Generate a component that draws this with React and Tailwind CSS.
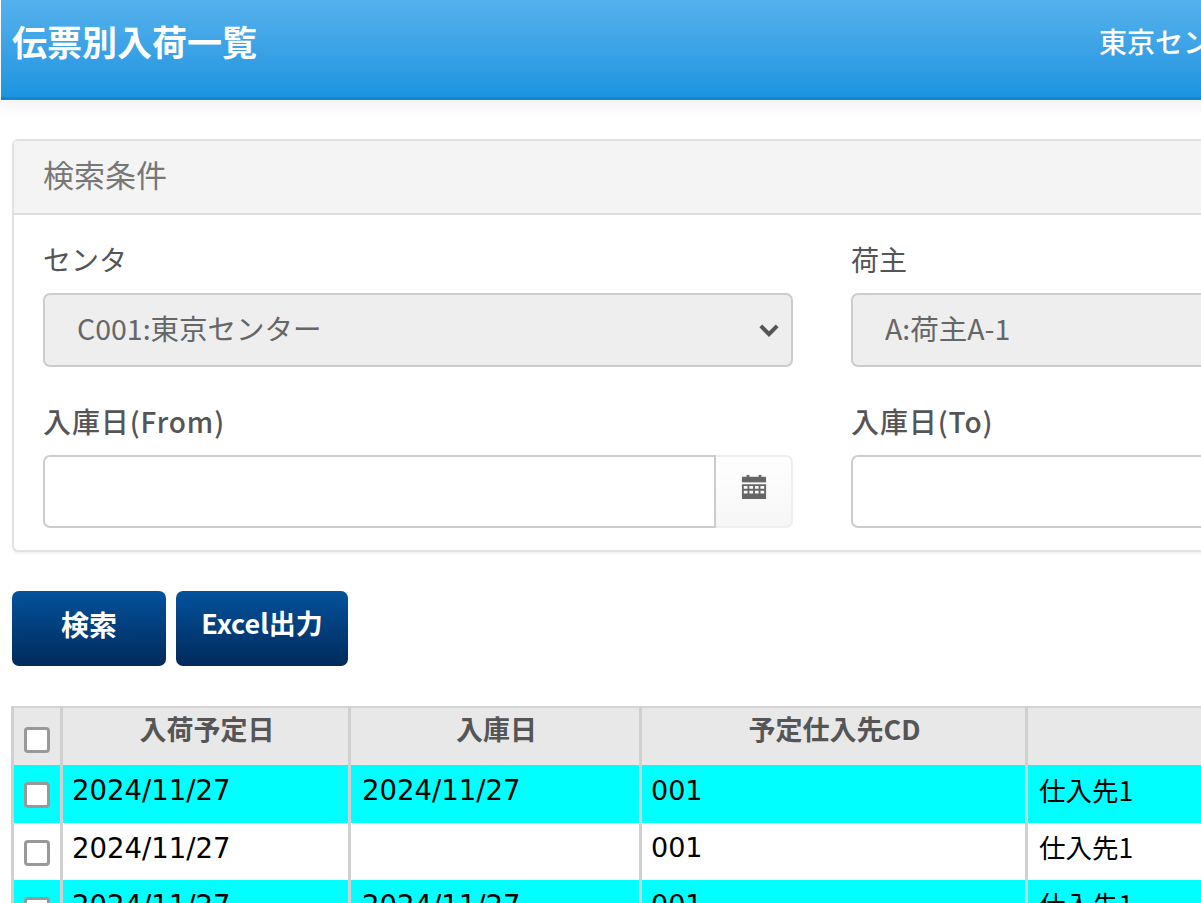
const jp = '[font-family:"Noto_Sans_CJK_JP","Noto_Sans",sans-serif]'

const rows = [
  { cyan: true, plan: '2024/11/27', date: '2024/11/27' },
  { cyan: false, plan: '2024/11/27', date: '' },
  { cyan: true, plan: '2024/11/27', date: '2024/11/27' },
]

function Field({ label, bold, children }) {
  return (
    <div className="flex flex-col">
      <label className={`h-[40px] mb-[14px] text-[28px] leading-[40px] text-[#555] ${bold ? 'font-medium tracking-[0.9px]' : ''}`}>{label}</label>
      {children}
    </div>
  )
}

function CalendarIcon() {
  return (
    <svg className="w-[26px] h-[26px] mb-[10px]" viewBox="0 0 28 28" fill="#666">
      <rect x="6" y="1" width="3" height="4" />
      <rect x="19" y="1" width="3" height="4" />
      <rect x="1" y="3" width="26" height="6" />
      <path fillRule="evenodd" d="M1 11h26v16H1z M3 13v3h4v-3z M9 13v3h4v-3z M15 13v3h4v-3z M21 13v3h4v-3z M3 18v3h4v-3z M9 18v3h4v-3z M15 18v3h4v-3z M21 18v3h4v-3z" />
    </svg>
  )
}

function DateInput() {
  return (
    <div className="flex w-[750px] h-[73px]">
      <input className="flex-1 min-w-0 border-2 border-[#ccc] rounded-l-[7px] bg-white" />
      <div className="w-[77px] flex items-center justify-center border-2 border-l-0 border-[#eee] rounded-r-[7px] bg-gradient-to-b from-white to-[#f6f6f6]">
        <CalendarIcon />
      </div>
    </div>
  )
}

function DisabledSelect({ value }) {
  return (
    <div className="relative w-[750px] h-[74px]">
      <select disabled value={value} onChange={() => {}} className="w-full h-full appearance-none border-2 border-[#ccc] rounded-[7px] bg-[#eee] pl-[32px] pb-[4px] text-[28.5px] text-[#666]">
        <option>{value}</option>
      </select>
      <svg className="absolute right-[14px] top-[30px] w-[20px] h-[14px]" viewBox="0 0 22 15" fill="none" stroke="#555" strokeWidth="4.5">
        <path d="M2 3l9 9 9-9" />
      </svg>
    </div>
  )
}

function Check() {
  return <input type="checkbox" className="appearance-none block w-[26px] h-[26px] border-[3px] border-[#999] rounded-[4px] bg-white" />
}

export default function App() {
  return (
    <div className={`w-[1201px] h-[903px] overflow-hidden bg-white ${jp}`}>
      <div className="w-[2200px]">
        <header className="h-[100px] ml-px flex items-center bg-gradient-to-b from-[#54b1ec] to-[#1a94e0] border-b-[3px] border-[#1585cc] shadow-[0_8px_14px_rgba(0,0,0,0.05)] pl-[11px] pb-[16px] text-white">
          <h1 className="w-[1087px] text-[35px] font-bold leading-none">伝票別入荷一覧</h1>
          <span className="text-[28px] font-medium whitespace-nowrap">東京センター</span>
        </header>

        <div className="pl-[12px] pt-[39px]">
          <section className="w-[1800px] h-[413px] border-2 border-[#e2e2e2] rounded-[6px] shadow-[0_2px_2px_rgba(0,0,0,0.05)]">
            <div className="h-[74px] flex items-center pl-[29px] pb-[5px] bg-[#f4f4f4] border-b-2 border-[#ddd] text-[31px] text-[#777]">検索条件</div>
            <div className="pl-[29px] pt-[24px] flex flex-col gap-[34px]">
              <div className="grid grid-cols-[750px_750px] gap-x-[58px]">
                <Field label="センタ"><DisabledSelect value="C001:東京センター" /></Field>
                <Field label="荷主"><DisabledSelect value="A:荷主A-1" /></Field>
              </div>
              <div className="grid grid-cols-[750px_750px] gap-x-[58px]">
                <Field label="入庫日(From)" bold><DateInput /></Field>
                <Field label="入庫日(To)" bold><DateInput /></Field>
              </div>
            </div>
          </section>

          <div className="flex gap-[10px] mt-[39px]">
            <button className="w-[154px] h-[75px] pb-[10px] rounded-[7px] bg-gradient-to-b from-[#04529d] to-[#012b5c] text-white text-[28px] font-bold">検索</button>
            <button className="w-[172px] h-[75px] pb-[10px] rounded-[7px] bg-gradient-to-b from-[#04529d] to-[#012b5c] text-white text-[27px] font-bold whitespace-nowrap">Excel出力</button>
          </div>

          <table className="mt-[40px] -ml-px w-[1700px] table-fixed border-collapse border-2 border-[#d4d4d4]">
            <colgroup>
              <col className="w-[49px]" />
              <col className="w-[288px]" />
              <col className="w-[291px]" />
              <col className="w-[386px]" />
              <col />
            </colgroup>
            <thead>
              <tr className="h-[58px] bg-[#e8e8e8] text-[#555] text-[27px] font-bold">
                <th className="border-x-[3px] border-[#d0d0d0] pl-[10px] pt-[19px] align-top"><Check /></th>
                <th className="border-x-[3px] border-[#d0d0d0] pl-[3px] pb-[14px]">入荷予定日</th>
                <th className="border-x-[3px] border-[#d0d0d0] pl-[3px] pb-[14px]">入庫日</th>
                <th className="border-x-[3px] border-[#d0d0d0] pl-[2px] pb-[14px]">予定仕入先CD</th>
                <th className="border-x-[3px] border-[#d0d0d0] pb-[14px]"></th>
              </tr>
            </thead>
            <tbody className="text-black">
              {rows.map((r, i) => (
                <tr key={i} className={`h-[57.5px] ${r.cyan ? 'bg-[#00ffff]' : 'bg-white'}`}>
                  <td className="border-x-[3px] border-[#d0d0d0] pl-[10px] pt-[3px]"><Check /></td>
                  <td className="border-x-[3px] border-[#d0d0d0] pl-[9px] pb-[6px] text-[27.5px] [font-family:'DejaVu_Sans',sans-serif]">{r.plan}</td>
                  <td className="border-x-[3px] border-[#d0d0d0] pl-[11px] pb-[6px] text-[27.5px] [font-family:'DejaVu_Sans',sans-serif]">{r.date}</td>
                  <td className="border-x-[3px] border-[#d0d0d0] pl-[9px] pb-[6px] text-[27px] [font-family:'DejaVu_Sans',sans-serif]">001</td>
                  <td className="border-x-[3px] border-[#d0d0d0] pl-[11px] pb-[8px] text-[26.5px]">仕入先1</td>
                </tr>
              ))}
            </tbody>
          </table>
        </div>
      </div>
    </div>
  )
}
